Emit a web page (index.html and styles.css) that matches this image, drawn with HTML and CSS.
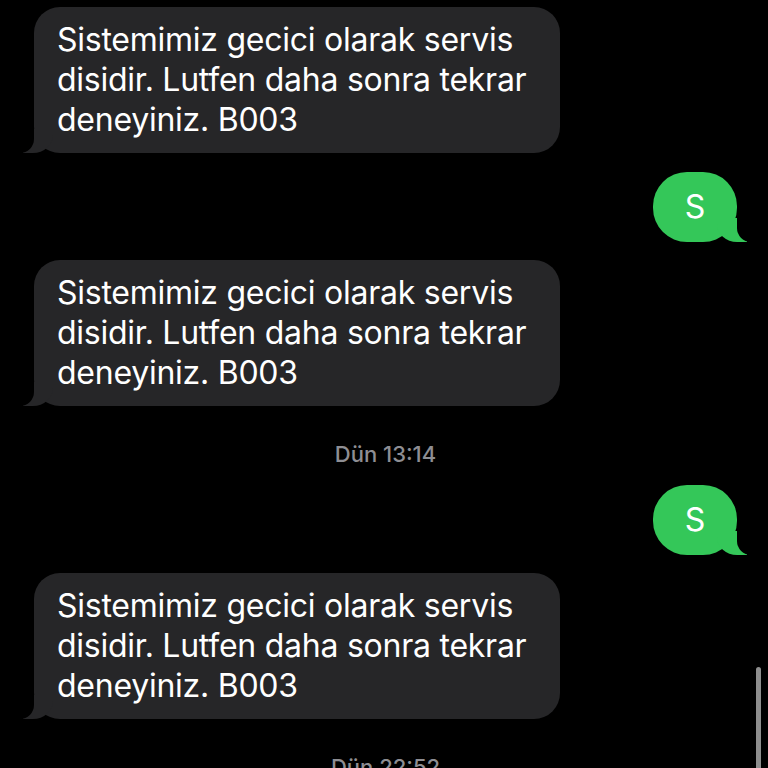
FILE: index.html
```html
<!DOCTYPE html>
<html lang="tr">
<head>
<meta charset="utf-8">
<title>Mesajlar</title>
<link rel="stylesheet" href="styles.css">
</head>
<body>
<main class="thread">
  <div class="bubble in first">Sistemimiz gecici olarak servis disidir. Lutfen daha sonra tekrar deneyiniz. B003</div>
  <div class="bubble out">S</div>
  <div class="bubble in">Sistemimiz gecici olarak servis disidir. Lutfen daha sonra tekrar deneyiniz. B003</div>
  <div class="stamp">Dün 13:14</div>
  <div class="bubble out after-stamp">S</div>
  <div class="bubble in">Sistemimiz gecici olarak servis disidir. Lutfen daha sonra tekrar deneyiniz. B003</div>
  <div class="stamp">Dün 22:52</div>
</main>
<div class="scroll-indicator"></div>
</body>
</html>
```

FILE: styles.css
```css
html, body {
  margin: 0;
  padding: 0;
  background: #000;
  height: 768px;
  overflow: hidden;
}

body {
  font-family: Inter, "Noto Sans", "Liberation Sans", sans-serif;
  color: #fff;
}

.thread {
  display: flex;
  flex-direction: column;
  padding: 0 31px 0 34px;
}

.bubble {
  position: relative;
  font-size: 32px;
  line-height: 40px;
  letter-spacing: -0.25px;
  margin-top: 18px;
}

.bubble.in {
  align-self: flex-start;
  box-sizing: border-box;
  width: 526px;
  padding: 13px 20px 13px 23px;
  background: #262628;
  border-radius: 26px;
}

.bubble.in.first {
  margin-top: 7px;
}

.bubble.out {
  align-self: flex-end;
  box-sizing: border-box;
  width: 84px;
  height: 70px;
  padding-top: 15px;
  text-align: center;
  background: #34c759;
  border-radius: 34px;
  margin-top: 19px;
}

.bubble.out.after-stamp {
  margin-top: 19px;
}

/* tails */
.bubble.in::before,
.bubble.in::after,
.bubble.out::before,
.bubble.out::after {
  content: "";
  position: absolute;
  bottom: 0;
  height: 24px;
}

.bubble.in::before {
  left: -11px;
  width: 30px;
  background: #262628;
  border-bottom-right-radius: 20px 18px;
}

.bubble.in::after {
  left: -30px;
  width: 30px;
  background: #000;
  border-bottom-right-radius: 14px;
}

.bubble.out::before {
  right: -10px;
  width: 30px;
  background: #34c759;
  border-bottom-left-radius: 20px 18px;
}

.bubble.out::after {
  right: -30px;
  width: 30px;
  background: #000;
  border-bottom-left-radius: 14px;
}

.stamp {
  align-self: center;
  margin: 36px 0 0;
  font-size: 22px;
  line-height: 24px;
  color: #8e8e93;
  font-weight: 500;
}

.scroll-indicator {
  position: absolute;
  left: 756px;
  top: 667px;
  width: 5px;
  height: 110px;
  border-radius: 3px;
  background: #8e8e8e;
}
```
